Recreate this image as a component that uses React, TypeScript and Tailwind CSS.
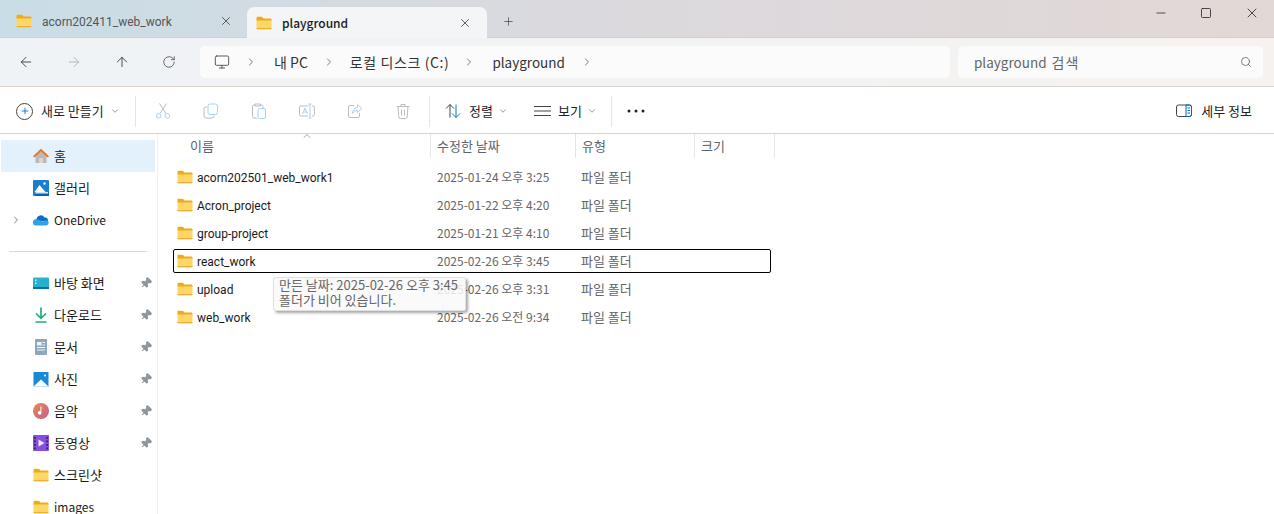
import React from 'react';
import { ArrowLeft, ArrowRight, ArrowUp, ChevronDown, ChevronRight, ChevronUp, Minus, Monitor, Pin, Plus, RotateCw, Search, Square, X } from 'lucide-react';

const FONT = '"Noto Sans CJK KR", "Open Sans", sans-serif';

const Folder = ({ className = 'w-4 h-4' }: { className?: string }) => (
  <svg viewBox="0 0 16 16" className={className}>
    <path d="M0.500 3c0-.8.6-1.200 1.200-1.200h3.600c.5 0 .8.2 1.100.5L7.600 3.400h6.700c.7 0 1.200.5 1.200 1.200V6H.5z" fill="#eeaa18" />
    <path d="M.5 5.400h15v7.800c0 .7-.5 1.100-1.200 1.100H1.700c-.7 0-1.200-.4-1.200-1.100z" fill="#fcd768" />
    <path d="M.5 13h15v.3c0 .6-.5 1-1.200 1H1.700c-.7 0-1.200-.4-1.200-1z" fill="#eeb02c" />
  </svg>
);

const folders = [
  { name: 'acorn202501_web_work1', date: '2025-01-24 오후 3:25' },
  { name: 'Acron_project', date: '2025-01-22 오후 4:20' },
  { name: 'group-project', date: '2025-01-21 오후 4:10' },
  { name: 'react_work', date: '2025-02-26 오후 3:45', focused: true },
  { name: 'upload', date: '2025-02-26 오후 3:31' },
  { name: 'web_work', date: '2025-02-26 오전 9:34' },
];

const NavIcon = ({ kind }: { kind: string }) => {
  if (kind === 'home')
    return (
      <svg viewBox="0 0 16 16" className="w-4 h-4">
        <path d="M2.500 7.500 8 2.500l5.500 5v7.500H10v-4.500H6V15H2.500z" fill="#bdb8b3" />
        <path d="M6 10.500h4V15H6z" fill="#d9d6d2" />
        <path d="M0 8.300 8 .8l8 7.500-1.300 1.200L8 3.300 1.300 9.500z" fill="#e3761a" />
      </svg>
    );
  if (kind === 'gallery')
    return (
      <svg viewBox="0 0 16 16" className="w-4 h-4">
        <rect x="0" y="0" width="16" height="16" rx="1" fill="#1a7fd0" />
        <path d="M1.500 12 6.500 5l6 7z" fill="#fff" />
        <circle cx="11.500" cy="3.500" r="1.200" fill="#fff" />
        <path d="M2.500 13.500H16V16H2.500z" fill="#0f62a8" />
        <path d="M2.500 12H15v1.500H2.500z" fill="#cfe6f7" />
      </svg>
    );
  if (kind === 'cloud')
    return (
      <svg viewBox="0 0 16 16" className="w-4 h-4">
        <path d="M3.500 7a4.300 4.300 0 0 1 8-1.500A3 3 0 0 1 15 9H5z" fill="#0f6cc4" />
        <path d="M2.800 13.500h10.200a2.800 2.800 0 0 0 .6-5.500L10 9.500 4.800 7.500A3.100 3.100 0 0 0 0 10.500a3 3 0 0 0 2.800 3z" fill="#2ea3e8" />
      </svg>
    );
  if (kind === 'desktop')
    return (
      <svg viewBox="0 0 16 16" className="w-4 h-4">
        <rect x="0" y="2.500" width="16" height="11.500" rx="1" fill="#28b0cf" />
        <rect x="0" y="12" width="16" height="2" fill="#0f6c9c" />
        <rect x="2" y="4.500" width="1.500" height="1.500" fill="#d4f0f7" />
        <rect x="2" y="7.500" width="1.500" height="1.500" fill="#d4f0f7" />
      </svg>
    );
  if (kind === 'download')
    return (
      <svg viewBox="0 0 16 16" className="w-4 h-4" fill="none" stroke="#1fae7e" strokeWidth="1.700">
        <path d="M8 .5V11M3 6.500 8 11.400l5-4.900M2.500 15h11" />
      </svg>
    );
  if (kind === 'doc')
    return (
      <svg viewBox="0 0 16 16" className="w-4 h-4">
        <rect x="2" y="0" width="12" height="16" rx="1" fill="#8fa6bf" />
        <path d="M4 3h4.500v3.500H4zM9.500 3H12v1H9.500zM9.500 5.500H12v1H9.500zM4 8h8v1H4zM4 10.500h8v1H4z" fill="#f2f6fa" />
      </svg>
    );
  if (kind === 'photo')
    return (
      <svg viewBox="0 0 16 16" className="w-4 h-4">
        <rect x="0.500" y="1" width="15" height="14.500" fill="#1a88d8" />
        <path d="M.5 15.500 8 8.500l7.500 7z" fill="#fff" />
        <circle cx="12" cy="4.500" r="1" fill="#fff" />
      </svg>
    );
  if (kind === 'music')
    return (
      <svg viewBox="0 0 16 16" className="w-4 h-4">
        <defs>
          <linearGradient id="musicFill" x1="0" y1="0" x2="1" y2="1">
            <stop offset="0" stopColor="#e98a4e" />
            <stop offset="1" stopColor="#c25c96" />
          </linearGradient>
        </defs>
        <circle cx="8" cy="8" r="8" fill="url(#musicFill)" />
        <path d="M8.400 3.500v6.300a1.800 1.800 0 1 1-1-1.600V3.500zM8.400 3.500c.3 1.500 2 1.500 2.200 3" fill="#fff" />
      </svg>
    );
  if (kind === 'video')
    return (
      <svg viewBox="0 0 16 16" className="w-4 h-4">
        <rect x="0" y="0" width="16" height="16" rx="1" fill="#8550e0" />
        <path d="M5.500 4.500v7l6-3.500z" fill="#f2eaff" />
        <path d="M1 2h1.800v1.800H1zM1 5.500h1.800v1.800H1zM1 9h1.800v1.800H1zM1 12.500h1.800v1.800H1zM13.200 2H15v1.800h-1.800zM13.200 5.500H15v1.800h-1.800zM13.200 9H15v1.800h-1.800zM13.200 12.500H15v1.800h-1.800z" fill="#35206e" />
      </svg>
    );
  return <Folder />;
};

const navTop = [
  { label: '홈', kind: 'home', size: 'text-[13px]', active: true },
  { label: '갤러리', kind: 'gallery', size: 'text-[13px]' },
  { label: 'OneDrive', kind: 'cloud', size: 'text-[12px]', expand: true },
];

const navPinned = [
  { label: '바탕 화면', kind: 'desktop', size: 'text-[13px]', pin: true },
  { label: '다운로드', kind: 'download', size: 'text-[13px]', pin: true },
  { label: '문서', kind: 'doc', size: 'text-[13px]', pin: true },
  { label: '사진', kind: 'photo', size: 'text-[13px]', pin: true },
  { label: '음악', kind: 'music', size: 'text-[13px]', pin: true },
  { label: '동영상', kind: 'video', size: 'text-[13px]', pin: true },
  { label: '스크린샷', kind: 'folder', size: 'text-[13px]' },
  { label: 'images', kind: 'folder', size: 'text-[12px]' },
];

type NavItem = { label: string; kind: string; size: string; active?: boolean; expand?: boolean; pin?: boolean };

const NavRow = ({ item }: { item: NavItem }) => (
  <div className={`relative flex h-8 items-center pl-[32px] text-[#1a1a1a] rounded-[2px] ${item.size} ${item.active ? 'bg-[#e3f1fc]' : ''}`}>
    {item.expand && <ChevronRight className="absolute left-[9px] w-3 h-3 text-[#808080]" strokeWidth={2} />}
    <NavIcon kind={item.kind} />
    <span className="ml-[5px] -mt-px">{item.label}</span>
    {item.pin && <Pin className="absolute right-[3px] w-3 h-3 rotate-45 text-[#8f979e] fill-[#8f979e]" />}
  </div>
);

const Divider = ({ className }: { className: string }) => <div className={`h-[31px] w-px bg-[#e6e6e6] ${className}`} />;

const Caret = () => <ChevronDown className="ml-[5px] h-[10px] w-[10px] text-[#888]" />;

// 비활성 도구 아이콘들
const ToolIcons = () => (
  <div className="ml-[19px] flex items-center gap-8">
    <svg viewBox="0 0 16 16" className="h-4 w-4" fill="none">
      <path d="M5 10.500 11.500.5M11 10.500 4.500.5" stroke="#bdbdbd" />
      <circle cx="3.700" cy="12.800" r="2.300" stroke="#a5d2f2" />
      <circle cx="12.300" cy="12.800" r="2.300" stroke="#a5d2f2" />
    </svg>
    <svg viewBox="0 0 16 16" className="h-4 w-4" fill="none">
      <path d="M4 4H3a2 2 0 0 0-2 2v7a2 2 0 0 0 2 2h6a2 2 0 0 0 2-2v-.5" stroke="#bdbdbd" />
      <rect x="5" y="1" width="9.500" height="10.500" rx="2" stroke="#a5d2f2" />
    </svg>
    <svg viewBox="0 0 16 16" className="h-4 w-4" fill="none">
      <path d="M4 2H3a1.500 1.500 0 0 0-1.500 1.500v10A1.500 1.500 0 0 0 3 15h3M9.500 2h1A1.500 1.500 0 0 1 12 3.500V5M4 1h5.500v2H4z" stroke="#bdbdbd" />
      <rect x="7" y="5.500" width="7.500" height="10" rx="1.500" stroke="#a5d2f2" />
    </svg>
    <svg viewBox="0 0 16 16" className="h-4 w-4" fill="none">
      <path d="M9 3H2a1.500 1.500 0 0 0-1.500 1.500v7A1.500 1.500 0 0 0 2 13h7M13 3h1a1.500 1.500 0 0 1 1.500 1.500v7A1.500 1.500 0 0 1 14 13h-1" stroke="#bdbdbd" />
      <path d="M3.500 11 6 5l2.500 6M4.500 9h3M11 1v14M9.500 1h3M9.500 15h3" stroke="#a5d2f2" />
    </svg>
    <svg viewBox="0 0 16 16" className="h-4 w-4" fill="none">
      <path d="M7 2.500H3A1.500 1.500 0 0 0 1.500 4v9A1.500 1.500 0 0 0 3 14.500h8a1.500 1.500 0 0 0 1.500-1.500v-3" stroke="#bdbdbd" />
      <path d="M10.500 1.500 15 5.500l-4.500 4V7.500c-2.500 0-4 1-5 3 0-3.500 2-5.500 5-6z" stroke="#a5d2f2" />
    </svg>
    <svg viewBox="0 0 16 16" className="h-4 w-4" fill="none" stroke="#bdbdbd">
      <path d="M1.500 3.500h13M6 3.500V1.500h4v2M3 3.500l.8 10.500a1.500 1.500 0 0 0 1.500 1.500h5.400a1.500 1.500 0 0 0 1.500-1.500l.8-10.500M6.500 6.500v6M9.500 6.500v6" />
    </svg>
  </div>
);

export default function App() {
  return (
    <div className="flex h-[514px] w-[1274px] flex-col overflow-hidden bg-white" style={{ fontFamily: FONT }}>
      {/* 탭 바 */}
      <div className="relative flex h-[38px] items-end border-b border-[#d5cfcd] bg-gradient-to-r from-[#c9dde6] via-[#dcd9dd] to-[#e2d8d6]">
        <div className="mb-[1px] flex h-[30px] w-[247px] items-center pl-[16px] pr-[14px] text-[12px] text-[#555]">
          <Folder />
          <span className="ml-[10px] flex-1 pt-px" style={{ fontFamily: 'Roboto, sans-serif' }}>acorn202411_web_work</span>
          <X className="h-[14px] w-[14px] text-[#333]" strokeWidth={1.3} />
        </div>
        <div className="relative z-10 -mb-px flex h-[31px] w-[240px] items-center rounded-t-[7px] bg-[#f3f5f6] pl-[9px] pr-[15px] text-[12px] font-medium text-[#1a1a1a]">
          <Folder />
          <span className="ml-[10px] flex-1">playground</span>
          <X className="h-[14px] w-[14px] text-[#333]" strokeWidth={1.3} />
        </div>
        <Plus className="ml-[15px] mb-[9px] h-[13px] w-[13px] text-[#333]" strokeWidth={1.2} />
        <div className="ml-auto flex h-[26px] items-center gap-8 self-start pr-[14px]">
          <Minus className="h-[14px] w-[14px] text-[#222]" strokeWidth={1.3} />
          <Square className="h-3 w-3 text-[#222]" strokeWidth={1.6} />
          <X className="h-4 w-4 text-[#222]" strokeWidth={1.2} />
        </div>
      </div>

      {/* 주소 바 */}
      <div className="flex h-[49px] items-center gap-2 border-b border-[#d9d3d0] bg-gradient-to-r from-[#eff3f6] to-[#f6f2f0] pr-[11px]">
        <div className="flex w-[192px] items-center gap-8 pl-[18px]">
          <ArrowLeft className="h-4 w-4 text-[#333]" strokeWidth={1.3} />
          <ArrowRight className="h-4 w-4 text-[#aaa]" strokeWidth={1.3} />
          <ArrowUp className="h-4 w-4 text-[#333]" strokeWidth={1.3} />
          <RotateCw className="h-[14px] w-[14px] text-[#444]" strokeWidth={1.3} />
        </div>
        <div className="flex h-8 w-[750px] items-center rounded-[5px] bg-[#fbfbfb] pl-[14px] text-[14px] text-[#333]">
          <Monitor className="h-4 w-4 text-[#444]" strokeWidth={1.3} />
          <ChevronRight className="ml-[15px] h-3 w-3" strokeWidth={1.3} />
          <span className="ml-[17px]">내 PC</span>
          <ChevronRight className="ml-[15px] h-3 w-3" strokeWidth={1.3} />
          <span className="ml-[15px] tracking-[0.6px]">로컬 디스크 (C:)</span>
          <ChevronRight className="ml-[14px] h-3 w-3" strokeWidth={1.3} />
          <span className="ml-[17px] text-[13.5px]">playground</span>
          <ChevronRight className="ml-[16px] h-3 w-3" strokeWidth={1.3} />
        </div>
        <div className="flex h-8 flex-1 items-center justify-between rounded-[5px] bg-[#fbfbfb] pl-[16px] pr-[11px] text-[13.5px] text-[#666]">
          <span>playground <span className="ml-[2px] tracking-[1px] text-[14px]">검색</span></span>
          <Search className="h-3 w-3 text-[#555]" strokeWidth={1.5} />
        </div>
      </div>

      {/* 명령 모음 */}
      <div className="flex h-[47px] items-center border-b border-[#d8d2d0] pl-[16px] pr-[22px] pt-[2px] text-[13px] text-[#222]">
        <span className="flex h-[17px] w-[17px] items-center justify-center rounded-full border border-[#444]">
          <Plus className="h-[10px] w-[10px] text-[#0067c0]" strokeWidth={2} />
        </span>
        <span className="ml-[8px] w-[64px] whitespace-nowrap">새로 만들기</span>
        <Caret />
        <Divider className="ml-[15px]" />
        <ToolIcons />
        <Divider className="ml-[18px]" />
        <svg viewBox="0 0 16 16" className="ml-[15px] h-4 w-4" fill="none">
          <path d="M5 14.500V1.500M1 5.500l4-4 4 4" stroke="#444" />
          <path d="M11 1.500v13M7 10.500l4 4 4-4" stroke="#0078d4" />
        </svg>
        <span className="ml-[8px]">정렬</span>
        <Caret />
        <svg viewBox="0 0 17 12" className="ml-[26px] h-3 w-[17px]" stroke="#444">
          <path d="M0 1.500h17M0 6h17M0 10.500h17" />
        </svg>
        <span className="ml-[7px]">보기</span>
        <Caret />
        <Divider className="ml-[14px]" />
        <svg viewBox="0 0 18 4" className="ml-[15px] h-1 w-[18px]" fill="#222">
          <circle cx="2" cy="2" r="1.500" />
          <circle cx="9" cy="2" r="1.500" />
          <circle cx="16" cy="2" r="1.500" />
        </svg>
        <div className="ml-auto flex items-center">
          <svg viewBox="0 0 16 14" className="h-[14px] w-4" fill="none">
            <rect x="0.500" y="1" width="15" height="11.500" rx="2" stroke="#444" />
            <path d="M10 1h3.500a2 2 0 0 1 2 2v7.500a2 2 0 0 1-2 2H10z" stroke="#0067c0" />
            <path d="M11.500 4h2.500M11.500 6.500h2.500M11.500 9h2.500" stroke="#0067c0" />
          </svg>
          <span className="ml-[9px]">세부 정보</span>
        </div>
      </div>

      {/* 본문 */}
      <div className="relative flex flex-1 overflow-hidden">
        <aside className="w-[158px] shrink-0 border-r border-[#f0f0f0] pl-[1px] pr-[2px] pt-[6px]">
          {navTop.map((item) => (
            <NavRow key={item.label} item={item} />
          ))}
          <div className="mx-[8px] my-[15px] h-px bg-[#d8d8d8]" />
          {navPinned.map((item) => (
            <NavRow key={item.label} item={item} />
          ))}
        </aside>

        <main className="relative flex-1 pl-[15px]">
          <div className="relative flex h-[24px] text-[13px] text-[#5a6470]">
            <ChevronUp className="absolute left-[128px] top-[-4px] h-3 w-3 text-[#666]" strokeWidth={1.2} />
            <div className="w-[258px] border-r border-[#e5e5e5] pl-[17px] leading-[24px]">이름</div>
            <div className="w-[145px] border-r border-[#e5e5e5] pl-[6px] leading-[24px]">수정한 날짜</div>
            <div className="w-[119px] border-r border-[#e5e5e5] pl-[6px] leading-[24px]">유형</div>
            <div className="w-[80px] border-r border-[#e5e5e5] pl-[6px] leading-[24px]">크기</div>
          </div>
          <div className="mt-[7px] flex w-[598px] flex-col gap-1">
            {folders.map((f) => (
              <div
                key={f.name}
                className={`flex h-[24px] items-center rounded-[2px] border pl-[3px] ${f.focused ? 'border-black' : 'border-transparent'}`}
              >
                <Folder />
                <span className="ml-[4px] w-[240px] pt-px text-[12px] text-[#1a1a1a]" style={{ fontFamily: 'Roboto, sans-serif' }}>{f.name}</span>
                <span className="w-[144px] text-[12px] text-[#666]">{f.date}</span>
                <span className="text-[13px] text-[#666]">파일 폴더</span>
              </div>
            ))}
          </div>
          {/* 툴팁 */}
          <div className="absolute left-[115px] top-[143px] h-[34px] w-[193px] rounded-[3px] border border-[#e0e0e0] bg-[#f9f9f9]/85 px-[5px] text-[13px] leading-[15px] text-[#666] shadow-[2px_2px_3px_rgba(0,0,0,0.35)]">
            <div className="-mt-px whitespace-nowrap">만든 날짜: 2025-02-26 오후 3:45</div>
            <div>폴더가 비어 있습니다.</div>
          </div>
        </main>
      </div>
    </div>
  );
}
